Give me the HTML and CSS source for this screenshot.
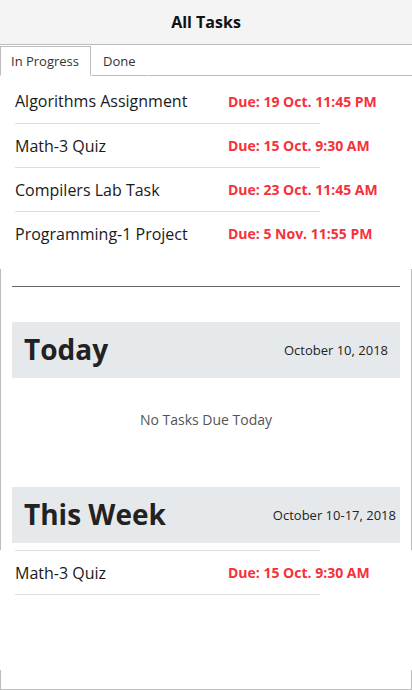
FILE: index.html
```html
<!DOCTYPE html>
<html>
<head>
<meta charset="utf-8">
<link rel="stylesheet" href="styles.css">
</head>
<body>
<header class="topbar">All Tasks</header>
<nav class="tabs">
  <div class="tab active">In Progress</div>
  <div class="tab">Done</div>
  <div class="tab-fill"></div>
</nav>
<main class="panel">
  <ul class="tasks first">
    <li class="task"><span class="name">Algorithms Assignment</span><span class="due">Due: 19 Oct. 11:45 PM</span></li>
    <li class="task"><span class="name">Math-3 Quiz</span><span class="due">Due: 15 Oct. 9:30 AM</span></li>
    <li class="task"><span class="name">Compilers Lab Task</span><span class="due">Due: 23 Oct. 11:45 AM</span></li>
    <li class="task"><span class="name">Programming-1 Project</span><span class="due">Due: 5 Nov. 11:55 PM</span></li>
  </ul>
  <hr class="rule">
  <section class="day">
    <div class="day-head"><h2>Today</h2><span class="date">October 10, 2018</span></div>
    <p class="empty">No Tasks Due Today</p>
  </section>
  <section class="week">
    <div class="day-head"><h2>This Week</h2><span class="date">October 10-17, 2018</span></div>
  </section>
  <ul class="tasks second">
    <li class="task"><span class="name">Math-3 Quiz</span><span class="due">Due: 15 Oct. 9:30 AM</span></li>
  </ul>
</main>
</body>
</html>
```
FILE: styles.css
```css
* { box-sizing: border-box; }
html, body { margin: 0; padding: 0; }
body {
  width: 412px;
  height: 690px;
  background: #fff;
  font-family: "Open Sans", "Liberation Sans", sans-serif;
  color: #222;
  display: flex;
  flex-direction: column;
  overflow: hidden;
}
.topbar {
  flex: 0 0 45px;
  background: #f4f4f4;
  border-bottom: 1px solid #bcbcbc;
  font-weight: 700;
  font-size: 16px;
  color: #111;
  display: flex;
  align-items: center;
  justify-content: center;
  padding-bottom: 1px;
}
.tabs {
  display: flex;
  margin-top: 1px;
  flex: 0 0 30px;
}
.tab {
  font-size: 13px;
  color: #333;
  padding: 5px 11px 0;
  border: 1px solid transparent;
  border-bottom: 1px solid #bcbcbc;
}
.tab.active {
  border: 1px solid #bcbcbc;
  border-bottom-color: #fff;
  width: 91px;
  padding-left: 10px;
}
.tab-fill {
  flex: 1;
  border-bottom: 1px solid #bcbcbc;
}
.panel {
  flex: 1;
  border: 1px solid #bcbcbc;
  border-top: none;
  padding: 0 11px;
  display: flex;
  flex-direction: column;
}
.tasks {
  list-style: none;
  margin: 0 -12px;
  padding: 3px 0 0 15px;
  background: #fff;
}
.tasks.first { padding-bottom: 14px; }
.task {
  width: 305px;
  height: 44px;
  display: flex;
  align-items: center;
  border-top: 1px solid #dedede;
  white-space: nowrap;
}
.tasks.first .task:first-child { border-top: none; }
.name {
  flex: 0 0 213px;
  font-size: 16px;
  color: #1a1a1a;
}
.due {
  flex: 0 0 auto;
  font-size: 14px;
  font-weight: 700;
  color: #f73139;
}
.rule {
  margin: 17px 0 0;
  border: none;
  border-top: 1px solid #666;
  height: 0;
}
.day { margin-top: 35px; }
.day-head {
  height: 56px;
  background: #e6e9ec;
  display: flex;
  align-items: center;
  justify-content: space-between;
  padding: 0 12px;
}
.day-head h2 {
  margin: 0;
  font-size: 28px;
  font-weight: 700;
  color: #222;
  line-height: 1;
  padding-bottom: 2px;
}
.date {
  font-size: 13px;
  color: #222;
}
.week .day-head { padding-right: 4px; }
.empty {
  margin: 0;
  height: 109px;
  padding-top: 32px;
  text-align: center;
  font-size: 14px;
  color: #555;
}
.tasks.second {
  margin-top: 7px;
  padding-top: 0;
  height: 120px;
}
.tasks.second .task { border-bottom: 1px solid #dedede; height: 45px; }
```
